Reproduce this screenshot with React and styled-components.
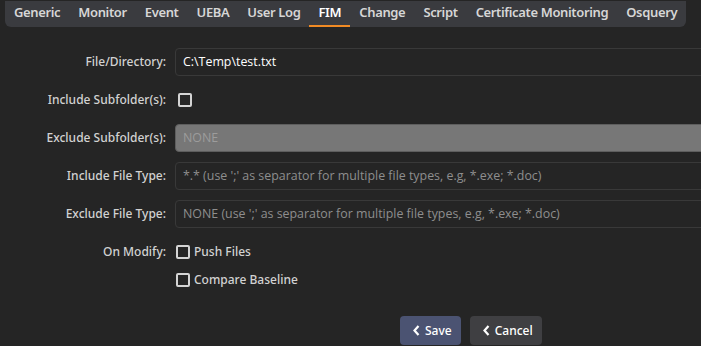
import React from 'react'
import styled, { createGlobalStyle } from 'styled-components'

const GlobalStyle = createGlobalStyle`
  html, body {
    margin: 0;
    padding: 0;
    background: #252525;
    overflow: hidden;
  }
  body {
    font-family: "Noto Sans", "DejaVu Sans", sans-serif;
  }
`

const Page = styled.div`
  width: 701px;
  height: 346px;
  background: #252525;
  overflow: hidden;
`

const TabBar = styled.div`
  display: inline-flex;
  align-items: stretch;
  height: 26px;
  margin-left: 5px;
  background: #3a3b3f;
  border-radius: 0 0 6px 6px;
`

const Tab = styled.div`
  position: relative;
  display: flex;
  align-items: center;
  padding: 0 9px 3px;
  font-size: 13px;
  font-weight: 600;
  letter-spacing: -0.36px;
  color: ${({ active }) => (active ? '#ffffff' : '#d6d6d6')};
  white-space: nowrap;
  &::after {
    content: '';
    display: ${({ active }) => (active ? 'block' : 'none')};
    position: absolute;
    left: 0;
    right: 0;
    bottom: 0;
    height: 2px;
    background: #f08a24;
  }
`

const Form = styled.div`
  display: grid;
  grid-template-columns: 166px 600px;
  column-gap: 9px;
  row-gap: 10px;
  padding-top: 21px;
`

const Label = styled.div`
  display: flex;
  align-items: ${({ top }) => (top ? 'flex-start' : 'center')};
  justify-content: flex-end;
  height: ${({ top }) => (top ? 'auto' : '28px')};
  line-height: 28px;
  font-size: 12px;
  font-weight: 500;
  color: #d2d2d2;
  white-space: nowrap;
`

const Input = styled.div`
  box-sizing: border-box;
  height: 28px;
  display: flex;
  align-items: center;
  padding: 0 7px;
  border: 1px solid ${({ disabled }) => (disabled ? '#5e5e5e' : '#393939')};
  border-radius: 4px;
  background: ${({ disabled }) => (disabled ? '#777777' : '#252525')};
  font-family: "Open Sans", "Noto Sans", sans-serif;
  font-size: 12.4px;
  color: ${({ placeholder, disabled }) =>
    disabled ? '#9c9c9c' : placeholder ? '#8e8e8e' : '#ffffff'};
  white-space: nowrap;
`

const Checks = styled.div`
  display: flex;
  flex-direction: column;
`

const CheckRow = styled.label`
  display: flex;
  align-items: center;
  gap: 4px;
  height: 28px;
  padding-left: ${({ indent }) => indent}px;
  font-size: 12px;
  font-weight: 500;
  color: #d2d2d2;
`

const Box = styled.span`
  box-sizing: border-box;
  width: 14px;
  height: 14px;
  border: 2px solid #d4d4d4;
  border-radius: 2px;
`

const Actions = styled.div`
  grid-column: 2;
  display: flex;
  gap: 9px;
  margin-top: 12px;
  padding-left: 225px;
`

const Button = styled.button`
  display: flex;
  align-items: center;
  gap: 5px;
  height: 29px;
  padding: 0 ${({ wide }) => (wide ? 9 : 9)}px 0 13px;
  border: none;
  border-radius: 4px;
  background: ${({ primary }) => (primary ? '#4b5372' : '#3f3f42')};
  color: #ffffff;
  font-family: "Noto Sans", sans-serif;
  font-size: 12px;
  font-weight: 500;
  cursor: pointer;
`

const Chevron = () => (
  <svg width="7" height="11" viewBox="0 0 7 11">
    <path d="M5.5 1 L1.5 5.5 L5.5 10" fill="none" stroke="#fff" strokeWidth="2.2" />
  </svg>
)

const tabs = ['Generic', 'Monitor', 'Event', 'UEBA', 'User Log', 'FIM', 'Change', 'Script', 'Certificate Monitoring', 'Osquery']

const App = () => {
  return (
    <Page>
      <GlobalStyle />
      <TabBar>
        {tabs.map((t) => (
          <Tab key={t} active={t === 'FIM'}>{t}</Tab>
        ))}
      </TabBar>
      <Form>
        <Label>File/Directory:</Label>
        <Input>C:\Temp\test.txt</Input>

        <Label>Include Subfolder(s):</Label>
        <Checks>
          <CheckRow indent={3}><Box /></CheckRow>
        </Checks>

        <Label>Exclude Subfolder(s):</Label>
        <Input disabled>NONE</Input>

        <Label>Include File Type:</Label>
        <Input placeholder="1">*.* (use ';' as separator for multiple file types, e.g, *.exe; *.doc)</Input>

        <Label>Exclude File Type:</Label>
        <Input placeholder="1">NONE (use ';' as separator for multiple file types, e.g, *.exe; *.doc)</Input>

        <Label top>On Modify:</Label>
        <Checks>
          <CheckRow indent={1}><Box />Push Files</CheckRow>
          <CheckRow indent={1}><Box />Compare Baseline</CheckRow>
        </Checks>

        <Actions>
          <Button primary><Chevron />Save</Button>
          <Button wide><Chevron />Cancel</Button>
        </Actions>
      </Form>
    </Page>
  )
}

export default App
